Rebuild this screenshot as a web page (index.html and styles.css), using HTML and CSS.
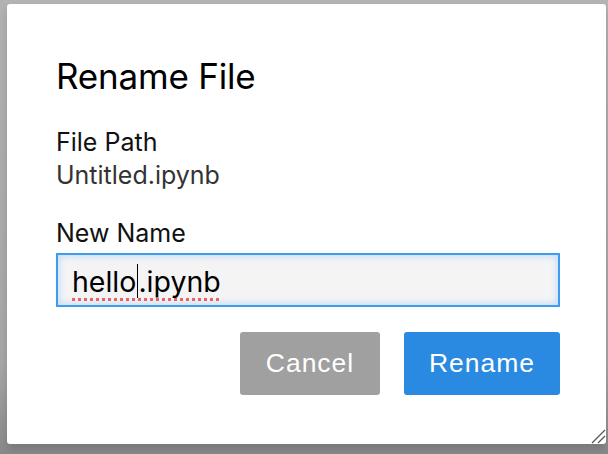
FILE: index.html
```html
<!DOCTYPE html>
<html>
<head>
<meta charset="utf-8">
<link rel="stylesheet" href="styles.css">
</head>
<body>
<div class="dialog">
  <h1 class="title">Rename File</h1>
  <div class="label">File Path</div>
  <div class="path">Untitled.ipynb</div>
  <div class="label new">New Name</div>
  <div class="input"><span class="typed">hello</span><span class="caret"></span><span class="typed">.ipynb</span></div>
  <div class="actions">
    <button class="btn cancel">Cancel</button>
    <button class="btn rename">Rename</button>
  </div>
  <svg class="grip" width="16" height="16" viewBox="0 0 16 16">
    <line x1="2" y1="15" x2="15" y2="2" stroke="#555" stroke-width="1.3"/>
    <line x1="8" y1="15" x2="15" y2="8" stroke="#555" stroke-width="1.3"/>
  </svg>
</div>
</body>
</html>
```
FILE: styles.css
```css
html, body {
  margin: 0;
  padding: 0;
}
body {
  width: 608px;
  height: 454px;
  background: linear-gradient(to bottom, #b3b3b3 0%, #a8a8a8 80%, #8a8a8a 100%);
  overflow: hidden;
  font-family: "Inter", "Liberation Sans", sans-serif;
  padding: 4px 2px 0 7px;
  box-sizing: border-box;
}
.dialog {
  position: relative;
  background: #fff;
  height: 440px;
  border-radius: 3px;
  box-sizing: border-box;
  padding: 51px 46px 0 49px;
  box-shadow: 0 6px 10px rgba(0,0,0,0.15);
}
.title {
  margin: 0 0 29px 0;
  font-size: 35px;
  font-weight: 400;
  color: #000;
  line-height: 42px;
  letter-spacing: -0.2px;
}
.label {
  font-size: 25px;
  line-height: 33px;
  color: #111;
}
.path {
  font-size: 25px;
  line-height: 33px;
  color: #333;
}
.label.new {
  margin-top: 25px;
}
.input {
  margin-top: 3px;
  height: 54px;
  box-sizing: border-box;
  border: 2px solid #3b9cf2;
  background: #f4f4f4;
  box-shadow: inset 0 0 6px 2px #c9def5;
  display: flex;
  align-items: center;
  padding: 2px 0 0 14px;
  font-size: 28.5px;
  color: #000;
}
.typed {
  text-decoration: underline dotted #f06060;
  text-decoration-thickness: 3px;
  text-underline-offset: 6px;
}
.caret {
  display: inline-block;
  width: 1px;
  height: 34px;
  background: #000;
  margin: 0 0 0 1px;
}
.actions {
  display: flex;
  justify-content: flex-end;
  gap: 24px;
  margin-top: 25px;
}
.btn {
  border: none;
  border-radius: 3px;
  color: #fff;
  font-family: "Liberation Sans", Arial, sans-serif;
  font-size: 26.5px;
  letter-spacing: 1px;
  height: 63px;
  padding: 0;
}
.cancel {
  background: #a0a0a0;
  width: 140px;
}
.rename {
  background: #2a8ae2;
  width: 156px;
}
.grip {
  position: absolute;
  right: 0;
  bottom: 0;
}
```
